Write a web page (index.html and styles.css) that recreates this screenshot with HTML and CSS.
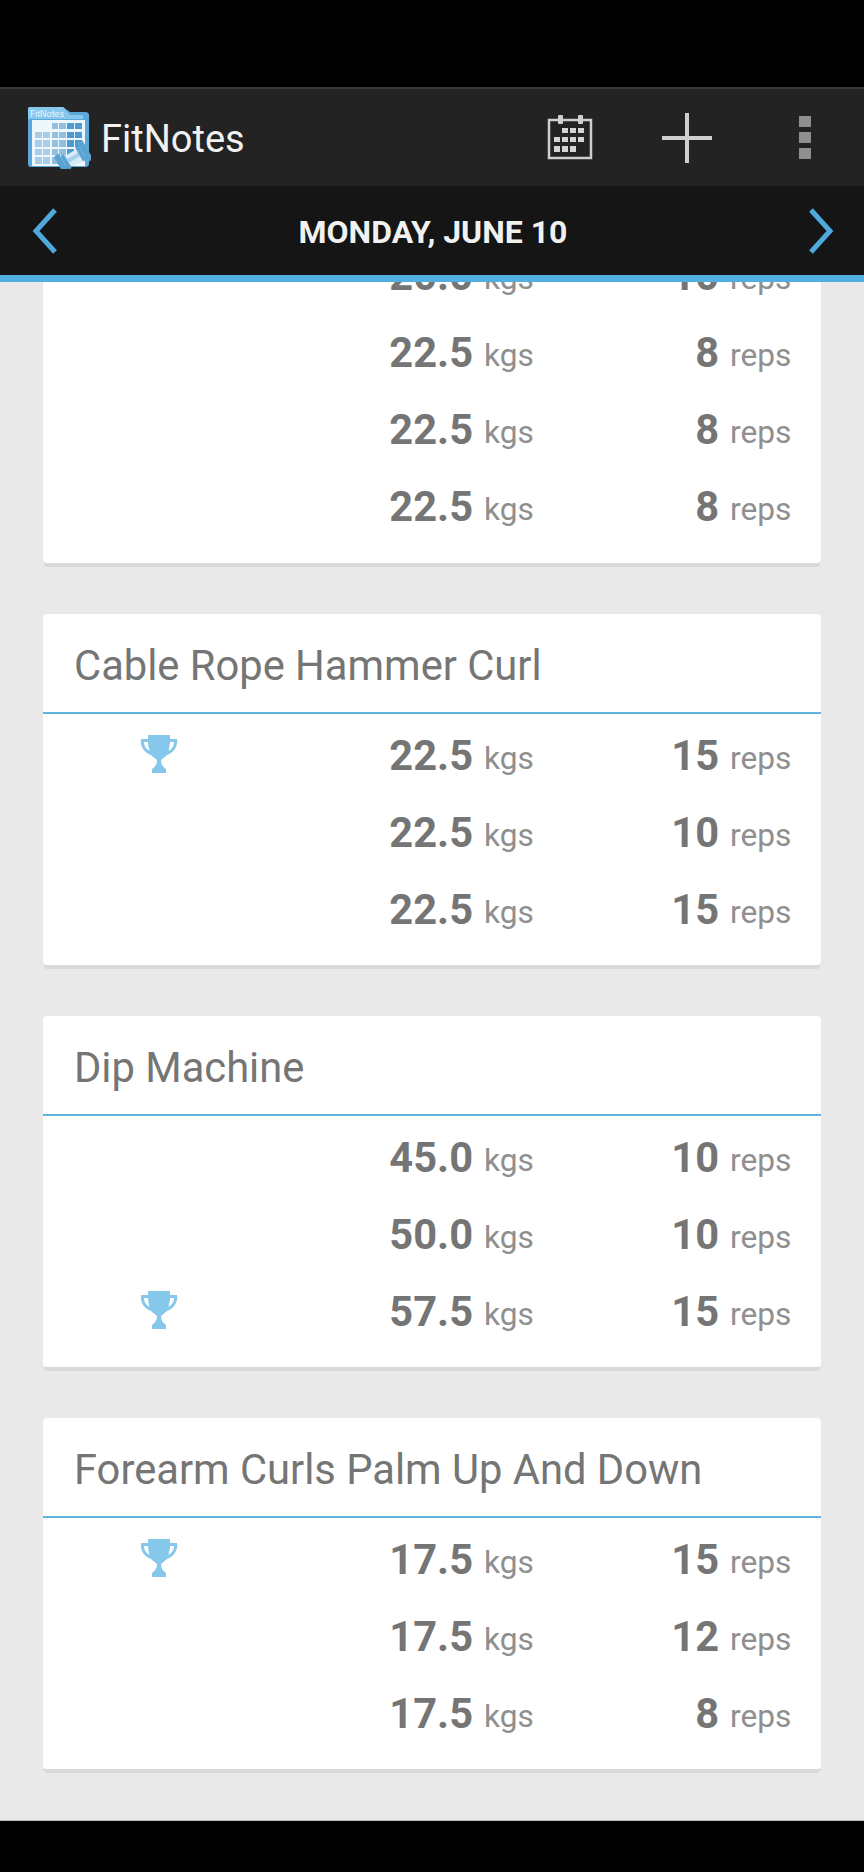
FILE: index.html
```html
<!DOCTYPE html>
<html lang="en">
<head>
  <meta charset="UTF-8" />
  <title>FitNotes</title>
  <link rel="stylesheet" href="styles.css">
</head>

<body>

  <div class="status-bar"></div>

  <div class="action-bar">
    <svg class="logo" width="66" height="64" viewBox="0 0 66 64">
      <path d="M3 4 Q3 2 5 2 H38 L45 7 H60 Q64 7 64 10 V59 Q64 62 60 62 H6 Q3 62 3 59 Z" fill="#5ba9d8" />
      <path d="M3 4 Q3 2 5 2 H38 L45 10 H58 V14 H3 Z" fill="#86c8ee" />
      <text x="5" y="12" class="logo-text">FitNotes</text>
      <rect x="7" y="15" width="53" height="46" fill="#eef7fc" />
      <g fill="#a9cde6">
        <rect x="10" y="27" width="7" height="6" /><rect x="18" y="27" width="7" height="6" />
        <rect x="10" y="35" width="7" height="7" /><rect x="18" y="35" width="7" height="7" />
        <rect x="10" y="44" width="7" height="6" /><rect x="18" y="44" width="7" height="6" />
        <rect x="10" y="52" width="7" height="7" /><rect x="18" y="52" width="7" height="7" />
      </g>
      <g fill="#92bfdf">
        <rect x="27" y="18" width="6" height="6" /><rect x="34" y="18" width="7" height="6" />
        <rect x="27" y="27" width="6" height="6" /><rect x="34" y="27" width="7" height="6" />
        <rect x="27" y="35" width="6" height="7" /><rect x="34" y="35" width="7" height="7" />
        <rect x="27" y="44" width="6" height="6" /><rect x="34" y="44" width="7" height="6" />
        <rect x="27" y="52" width="6" height="7" />
      </g>
      <g fill="#4f9bcf">
        <rect x="42" y="18" width="7" height="6" /><rect x="50" y="18" width="7" height="6" />
        <rect x="42" y="27" width="7" height="6" /><rect x="50" y="27" width="7" height="6" />
        <rect x="42" y="35" width="7" height="7" /><rect x="50" y="35" width="7" height="7" />
        <rect x="42" y="44" width="7" height="6" />
      </g>
      <path d="M38 52 L52 44 L60 56 L44 62 Z" fill="#d8ecf8" />
      <g transform="rotate(-30 48 53)" fill="#5ba3d3">
        <rect x="32" y="42" width="6" height="22" rx="2" />
        <rect x="38" y="45" width="4" height="16" rx="1" />
        <rect x="42" y="51" width="13" height="4" fill="#a6d0ec" />
        <rect x="55" y="45" width="4" height="16" rx="1" />
        <rect x="59" y="42" width="6" height="22" rx="2" />
      </g>
    </svg>
    <div class="app-title">FitNotes</div>
    <div class="actions">
      <svg width="46" height="46" viewBox="0 0 46 46" class="icon-calendar">
        <path d="M2 6 H44 V44 H2 Z" fill="none" stroke="#cfcfcf" stroke-width="2.5" />
        <rect x="11" y="1" width="5" height="9" rx="1" fill="#cfcfcf" />
        <rect x="31" y="1" width="5" height="9" rx="1" fill="#cfcfcf" />
        <g fill="#d4d4d4">
          <rect x="15" y="14" width="6" height="5" /><rect x="23" y="14" width="6" height="5" /><rect x="31" y="14" width="6" height="5" />
          <rect x="7" y="23" width="6" height="5" /><rect x="15" y="23" width="6" height="5" /><rect x="23" y="23" width="6" height="5" /><rect x="31" y="23" width="6" height="5" />
          <rect x="7" y="32" width="6" height="6" /><rect x="15" y="32" width="6" height="6" /><rect x="23" y="32" width="6" height="6" />
        </g>
      </svg>
      <svg width="50" height="50" viewBox="0 0 50 50" class="icon-plus">
        <rect x="0" y="23" width="50" height="4" fill="#cfcfcf" />
        <rect x="23" y="0" width="4" height="50" fill="#cfcfcf" />
      </svg>
      <div class="overflow-menu">
        <span></span><span></span><span></span>
      </div>
    </div>
  </div>

  <div class="date-bar">
    <svg width="26" height="46" viewBox="0 0 26 46"><path d="M23 2 L4 23 L23 44" fill="none" stroke="#4fa9dc" stroke-width="5" /></svg>
    <div class="date-title">MONDAY, JUNE 10</div>
    <svg width="26" height="46" viewBox="0 0 26 46"><path d="M3 2 L22 23 L3 44" fill="none" stroke="#4fa9dc" stroke-width="5" /></svg>
  </div>

  <div class="content">

    <div class="card first-card">
      <div class="row"><span></span><b>20.0</b><i>kgs</i><b>10</b><i>reps</i></div>
      <div class="row"><span></span><b>22.5</b><i>kgs</i><b>8</b><i>reps</i></div>
      <div class="row"><span></span><b>22.5</b><i>kgs</i><b>8</b><i>reps</i></div>
      <div class="row"><span></span><b>22.5</b><i>kgs</i><b>8</b><i>reps</i></div>
    </div>

    <div class="card">
      <div class="card-title">Cable Rope Hammer Curl</div>
      <div class="row">
        <span><svg class="trophy" viewBox="0 0 38 38"><use href="#trophy" /></svg></span>
        <b>22.5</b><i>kgs</i><b>15</b><i>reps</i>
      </div>
      <div class="row"><span></span><b>22.5</b><i>kgs</i><b>10</b><i>reps</i></div>
      <div class="row"><span></span><b>22.5</b><i>kgs</i><b>15</b><i>reps</i></div>
    </div>

    <div class="card">
      <div class="card-title">Dip Machine</div>
      <div class="row"><span></span><b>45.0</b><i>kgs</i><b>10</b><i>reps</i></div>
      <div class="row"><span></span><b>50.0</b><i>kgs</i><b>10</b><i>reps</i></div>
      <div class="row">
        <span><svg class="trophy" viewBox="0 0 38 38"><use href="#trophy" /></svg></span>
        <b>57.5</b><i>kgs</i><b>15</b><i>reps</i>
      </div>
    </div>

    <div class="card">
      <div class="card-title">Forearm Curls Palm Up And Down</div>
      <div class="row">
        <span><svg class="trophy" viewBox="0 0 38 38"><use href="#trophy" /></svg></span>
        <b>17.5</b><i>kgs</i><b>15</b><i>reps</i>
      </div>
      <div class="row"><span></span><b>17.5</b><i>kgs</i><b>12</b><i>reps</i></div>
      <div class="row"><span></span><b>17.5</b><i>kgs</i><b>8</b><i>reps</i></div>
    </div>

  </div>

  <div class="nav-bar"></div>

  <svg class="defs" width="0" height="0">
    <symbol id="trophy" viewBox="0 0 38 38">
      <path d="M8 0 H30 V4 H37 C38 10 35 17 27 20 C25 22 22 24 21 25 C21 29 23 32 26 34 V38 H12 V34 C15 32 17 29 17 25 C16 24 13 22 11 20 C3 17 0 10 1 4 H8 Z M8 7 H4 C4 11 6 14 9.5 16 C9 13 8 10 8 7 Z M30 7 C30 10 29 13 28.500 16 C32 14 34 11 34 7 Z" fill="#86c8ec" fill-rule="evenodd" />
    </symbol>
  </svg>

</body>
</html>
```

FILE: styles.css
```css
html, body {
  margin: 0;
  padding: 0;
}

body {
  width: 864px;
  height: 1872px;
  display: flex;
  flex-direction: column;
  overflow: hidden;
  font-family: Roboto, "Liberation Sans", sans-serif;
  background-color: #000;
}

.status-bar {
  height: 87px;
  flex: none;
  background-color: #000;
}

.action-bar {
  height: 99px;
  flex: none;
  box-sizing: border-box;
  display: flex;
  align-items: center;
  padding-left: 25px;
  background-color: #232323;
  border-top: 2px solid #383838;
}

.logo {
  flex: none;
  margin-top: -2px;
}

.logo-text {
  font-size: 9px;
  fill: #e8f4fb;
}

.app-title {
  font-size: 38px;
  color: #f2f2f2;
  margin-left: 10px;
  margin-top: 2px;
}

.actions {
  margin-left: auto;
  display: flex;
  align-items: center;
}

.icon-calendar {
  margin-right: 69px;
  margin-top: -2px;
}

.icon-plus {
  margin-right: 87px;
}

.overflow-menu {
  display: flex;
  flex-direction: column;
  gap: 5px;
  margin-right: 53px;
}

.overflow-menu span {
  display: block;
  width: 12px;
  height: 11px;
  background-color: #8f8f8f;
}

.date-bar {
  height: 96px;
  flex: none;
  box-sizing: border-box;
  display: flex;
  align-items: center;
  justify-content: space-between;
  padding: 0 30px 0 32px;
  background-color: #151515;
  border-bottom: 7px solid #52aede;
}

.date-title {
  font-size: 32px;
  font-weight: 700;
  color: #f1f1f1;
  margin-top: 3px;
}

.content {
  flex: 1;
  overflow: hidden;
  display: flex;
  flex-direction: column;
  gap: 51px;
  padding: 0 43px;
  background-color: #e9e9e9;
}

.card {
  flex: none;
  padding-bottom: 17px;
  border-radius: 4px;
  background-color: #fff;
  box-shadow: 0 5px 0 -1px #dadada;
}

.first-card {
  margin-top: -45px;
  padding-bottom: 18px;
}

.card-title {
  height: 100px;
  box-sizing: border-box;
  margin-bottom: 3px;
  padding-left: 31px;
  line-height: 103px;
  font-size: 41.7px;
  color: #757575;
  border-bottom: 2px solid #62b3de;
}

.row {
  height: 77px;
  display: grid;
  grid-template-columns: 232px 198px 126px 120px 1fr;
  align-items: center;
  color: #757575;
}

.row span {
  display: flex;
  justify-content: center;
  margin-top: -3px;
}

.row b {
  font-size: 41.6px;
  font-weight: 700;
  text-align: right;
}

.row i {
  font-size: 31.7px;
  font-style: normal;
  padding-left: 11px;
  color: #8f8f8f;
  margin-top: 5px;
}

.trophy {
  width: 38px;
  height: 38px;
}

.nav-bar {
  height: 51px;
  flex: none;
  background-color: #000;
  border-top: 1px solid #bdbdbd;
}

.defs {
  position: absolute;
}
```
